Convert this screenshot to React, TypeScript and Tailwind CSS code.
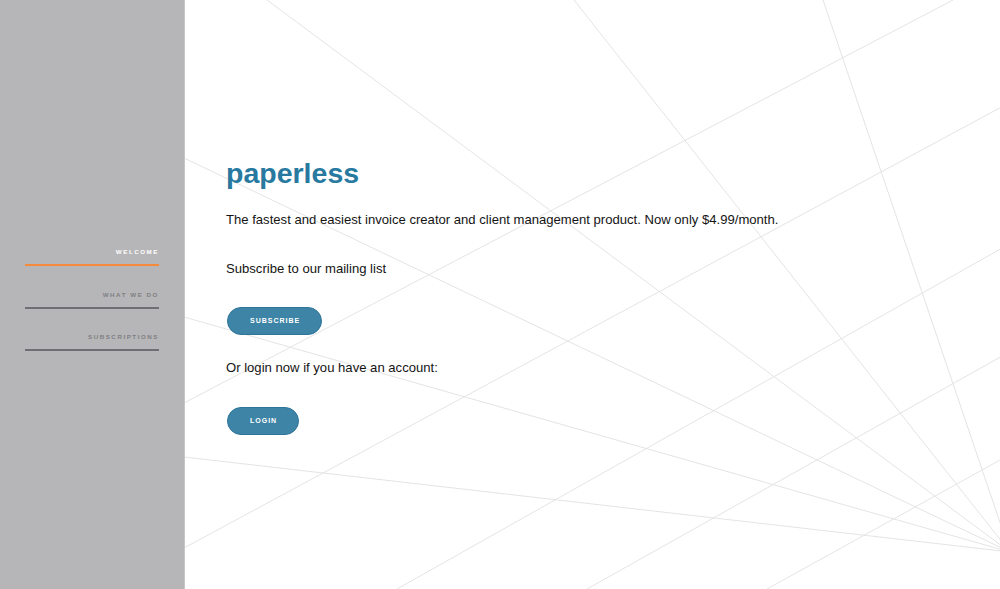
import React from "react";

const CX = 1010;
const CY = 552;

const radiating: [number, number][] = [
  [267, 0],
  [574, 0],
  [823, 0],
  [184, 158],
  [184, 317],
  [184, 457],
];

const parallels: [number, number, number, number][] = [
  [953, 0, 184, 403],
  [1020, 97, 184, 548],
  [397, 589, 1020, 238],
  [587, 589, 1020, 346],
  [767, 589, 1020, 449],
];

function Backdrop() {
  return (
    <svg
      className="absolute inset-0 h-full w-full"
      viewBox="185 0 815 589"
      preserveAspectRatio="none"
    >
      {radiating.map(([x, y], i) => (
        <line key={`r${i}`} x1={CX} y1={CY} x2={x} y2={y} stroke="#e4e4e4" strokeWidth={1} />
      ))}
      {parallels.map(([x1, y1, x2, y2], i) => (
        <line key={`p${i}`} x1={x1} y1={y1} x2={x2} y2={y2} stroke="#e4e4e4" strokeWidth={1} />
      ))}
    </svg>
  );
}

const navItems = [
  { label: "WELCOME", active: true },
  { label: "WHAT WE DO", active: false },
  { label: "SUBSCRIPTIONS", active: false },
];

export default function App() {
  return (
    <div
      className="flex h-[589px] w-full overflow-hidden bg-white"
      style={{ fontFamily: '"Liberation Sans", Arial, sans-serif' }}
    >
      <aside className="w-[185px] shrink-0 border-r border-[#c6c6c8] bg-[#b6b6b8] px-[25px] pt-[248px]">
        <ul className="flex flex-col gap-[24.5px]">
          {navItems.map((item) => (
            <li
              key={item.label}
              className={`border-b-2 pb-[8px] text-right text-[6.2px] font-bold leading-[8px] tracking-[1.55px] ${
                item.active
                  ? "border-[#f58a3d] text-white"
                  : "border-[#6e6f73] text-[#7f7f83]"
              }`}
            >
              {item.label}
            </li>
          ))}
        </ul>
      </aside>
      <main className="relative flex-1">
        <Backdrop />
        <div className="relative flex flex-col items-start pl-[41px] pt-[157px]">
          <h1 className="text-[28.5px] font-bold leading-[32px] text-[#27799f]">paperless</h1>
          <p className="mt-[21px] text-[13.1px] leading-[20px] text-[#141414]">
            The fastest and easiest invoice creator and client management product. Now only $4.99/month.
          </p>
          <p className="mt-[29px] text-[13.1px] leading-[20px] text-[#141414]">
            Subscribe to our mailing list
          </p>
          <button className="ml-px mt-[28px] flex h-[28px] items-center rounded-full border border-[#2f7599] bg-[#3d84a6] pl-[22px] pr-[21px] text-[7px] font-bold tracking-[1px] text-white">
            SUBSCRIBE
          </button>
          <p className="mt-[23px] text-[13.1px] leading-[20px] text-[#141414]">
            Or login now if you have an account:
          </p>
          <button className="ml-px mt-[29px] flex h-[28px] items-center rounded-full border border-[#2f7599] bg-[#3d84a6] pl-[22px] pr-[21px] text-[7px] font-bold tracking-[1px] text-white">
            LOGIN
          </button>
        </div>
      </main>
    </div>
  );
}
